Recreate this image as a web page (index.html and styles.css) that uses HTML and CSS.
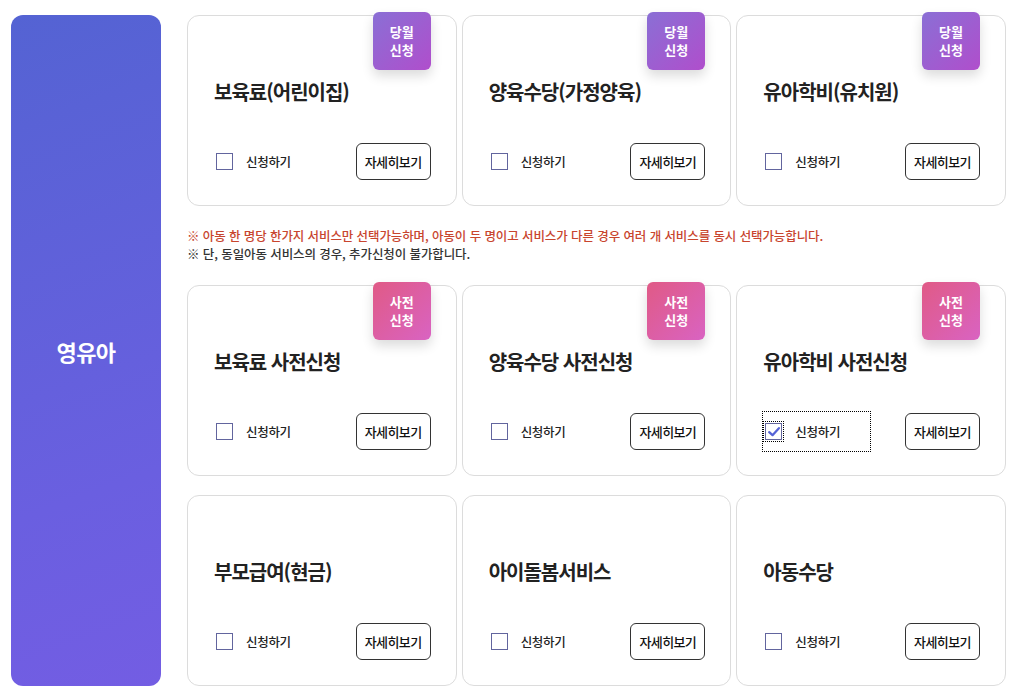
FILE: index.html
```html
<!DOCTYPE html>
<html lang="ko">
<head>
<meta charset="utf-8">
<title>영유아 서비스 신청</title>
<link rel="stylesheet" href="styles.css">
</head>
<body>
<div class="page">
  <aside class="side"><span>영유아</span></aside>
  <main class="content">
    <div class="grid">
      <div class="card">
        <span class="badge badge-month">당월<br>신청</span>
        <h3 class="title">보육료(어린이집)</h3>
        <div class="foot">
          <label class="chk"><span class="box"></span><span class="lbl">신청하기</span></label>
          <button class="more">자세히보기</button>
        </div>
      </div>
      <div class="card">
        <span class="badge badge-month">당월<br>신청</span>
        <h3 class="title">양육수당(가정양육)</h3>
        <div class="foot">
          <label class="chk"><span class="box"></span><span class="lbl">신청하기</span></label>
          <button class="more">자세히보기</button>
        </div>
      </div>
      <div class="card">
        <span class="badge badge-month">당월<br>신청</span>
        <h3 class="title">유아학비(유치원)</h3>
        <div class="foot">
          <label class="chk"><span class="box"></span><span class="lbl">신청하기</span></label>
          <button class="more">자세히보기</button>
        </div>
      </div>
    </div>

    <div class="notice">
      <p class="warn">※ 아동 한 명당 한가지 서비스만 선택가능하며, 아동이 두 명이고 서비스가 다른 경우 여러 개 서비스를 동시 선택가능합니다.</p>
      <p>※ 단, 동일아동 서비스의 경우, 추가신청이 불가합니다.</p>
    </div>

    <div class="grid">
      <div class="card">
        <span class="badge badge-pre">사전<br>신청</span>
        <h3 class="title">보육료 사전신청</h3>
        <div class="foot">
          <label class="chk"><span class="box"></span><span class="lbl">신청하기</span></label>
          <button class="more">자세히보기</button>
        </div>
      </div>
      <div class="card">
        <span class="badge badge-pre">사전<br>신청</span>
        <h3 class="title">양육수당 사전신청</h3>
        <div class="foot">
          <label class="chk"><span class="box"></span><span class="lbl">신청하기</span></label>
          <button class="more">자세히보기</button>
        </div>
      </div>
      <div class="card">
        <span class="badge badge-pre">사전<br>신청</span>
        <h3 class="title">유아학비 사전신청</h3>
        <div class="foot">
          <label class="chk chk-focus"><span class="box box-on"><svg viewBox="0 0 16 16" width="14" height="14"><path d="M2.5 8.2 L6.3 11.6 L13.6 3.6" fill="none" stroke="#5563d6" stroke-width="2.6" stroke-linecap="round" stroke-linejoin="round"/></svg></span><span class="lbl">신청하기</span></label>
          <button class="more">자세히보기</button>
        </div>
      </div>
    </div>

    <div class="grid grid-last">
      <div class="card">
        <h3 class="title">부모급여(현금)</h3>
        <div class="foot">
          <label class="chk"><span class="box"></span><span class="lbl">신청하기</span></label>
          <button class="more">자세히보기</button>
        </div>
      </div>
      <div class="card">
        <h3 class="title">아이돌봄서비스</h3>
        <div class="foot">
          <label class="chk"><span class="box"></span><span class="lbl">신청하기</span></label>
          <button class="more">자세히보기</button>
        </div>
      </div>
      <div class="card">
        <h3 class="title">아동수당</h3>
        <div class="foot">
          <label class="chk"><span class="box"></span><span class="lbl">신청하기</span></label>
          <button class="more">자세히보기</button>
        </div>
      </div>
    </div>
  </main>
</div>
</body>
</html>
```

FILE: styles.css
```css
* { box-sizing: border-box; }
html, body { margin: 0; padding: 0; background: #fff; }
body {
  font-family: "Noto Sans CJK KR", "Noto Sans", sans-serif;
  color: #222;
}
.page {
  display: flex;
  gap: 26px;
  padding: 15px 14px 0 11px;
  width: 1020px;
}
.side {
  width: 150px;
  flex: 0 0 150px;
  height: 671px;
  border-radius: 12px;
  background: linear-gradient(160deg, #5463d3 0%, #6a5fe0 70%, #735de3 100%);
  display: flex;
  align-items: center;
  justify-content: center;
}
.side span {
  color: #fff;
  font-size: 22px;
  font-weight: 700;
  letter-spacing: -0.6px;
}
.content { flex: 1; min-width: 0; }
.grid {
  display: grid;
  grid-template-columns: repeat(3, 1fr);
  gap: 5px;
}
.grid + .grid { margin-top: 19px; }
.card {
  position: relative;
  border: 1px solid #dcdcdc;
  border-radius: 12px;
  height: 191px;
  padding: 61px 25px 0 26px;
  background: #fff;
}
.badge {
  position: absolute;
  top: -4px;
  right: 25px;
  width: 58px;
  height: 58px;
  border-radius: 6px;
  color: #fff;
  font-size: 13px;
  font-weight: 700;
  line-height: 18px;
  display: flex;
  align-items: center;
  justify-content: center;
  text-align: center;
  box-shadow: 0 6px 12px rgba(0, 0, 0, 0.14);
}
.badge-month { background: linear-gradient(135deg, #8a6fd5 0%, #b04ecc 100%); }
.badge-pre { background: linear-gradient(135deg, #e05a86 0%, #d963c2 100%); }
.title {
  margin: 0;
  font-size: 20px;
  font-weight: 700;
  line-height: 30px;
  color: #222;
  letter-spacing: -1px;
}
.foot {
  display: flex;
  align-items: center;
  justify-content: space-between;
  margin-top: 35px;
}
.chk {
  display: inline-flex;
  align-items: center;
  height: 39px;
  width: 107px;
  padding-left: 2px;
  gap: 13px;
}
.chk-focus { outline: 1px dotted #000; }
.box {
  width: 17px;
  height: 17px;
  border: 1px solid #62659e;
  background: #fff;
  display: inline-flex;
  align-items: center;
  justify-content: center;
}
.box-on { outline: 1px dotted #000; outline-offset: 1px; }
.lbl {
  font-size: 12.5px;
  font-weight: 500;
  color: #222;
  letter-spacing: -0.3px;
}
.more {
  width: 75px;
  height: 37px;
  border: 1px solid #333;
  border-radius: 6px;
  background: #fff;
  font-family: inherit;
  font-size: 13px;
  font-weight: 500;
  color: #111;
  letter-spacing: -0.6px;
  padding: 0;
  cursor: pointer;
}
.notice {
  padding: 21px 0 22px;
}
.notice p {
  margin: 0;
  font-size: 12.5px;
  font-weight: 500;
  line-height: 18px;
  color: #333;
  letter-spacing: -0.1px;
}
.notice p.warn { color: #c8452e; }
```
